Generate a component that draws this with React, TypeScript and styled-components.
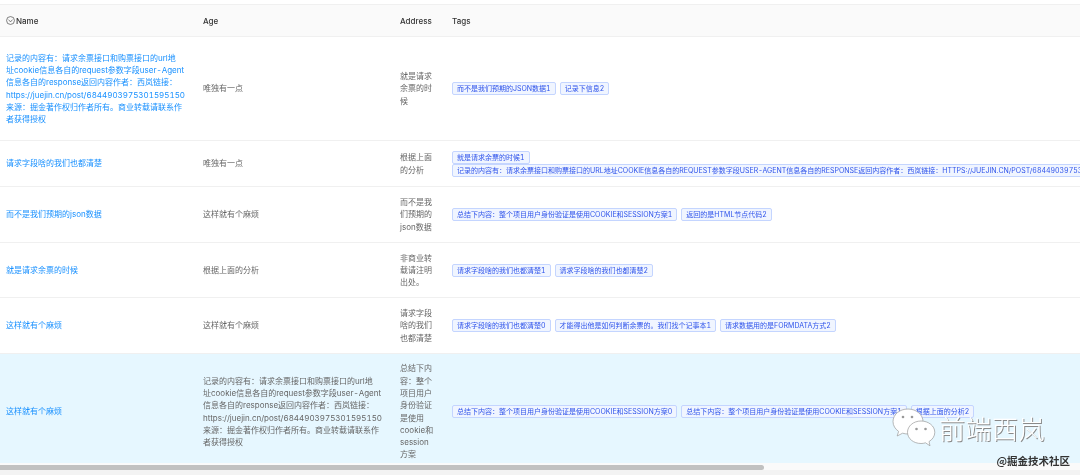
import React from 'react';
import styled, { createGlobalStyle } from 'styled-components';

const RECORD_LINES = [
  '记录的内容有：请求余票接口和购票接口的url地',
  '址cookie信息各自的request参数字段user-Agent',
  '信息各自的response返回内容作者：西岚链接：',
  'https://juejin.cn/post/6844903975301595150',
  '来源：掘金著作权归作者所有。商业转载请联系作',
  '者获得授权',
];
const RECORD = RECORD_LINES.join('');
const RECORD_WRAPPED = RECORD_LINES.join('\n');
const SUMMARY = '总结下内容：整个项目用户身份验证是使用cookie和session方案';

interface Row {
  name: string;
  age: string;
  address: string;
  tags: string[];
  height: number;
  selected?: boolean;
}

const rows: Row[] = [
  {
    name: RECORD_WRAPPED,
    age: '唯独有一点',
    address: '就是请求余票的时候',
    tags: ['而不是我们预期的json数据1', '记录下信息2'],
    height: 104,
  },
  {
    name: '请求字段啥的我们也都清楚',
    age: '唯独有一点',
    address: '根据上面的分析',
    tags: ['就是请求余票的时候1', `${RECORD}1`],
    height: 46,
  },
  {
    name: '而不是我们预期的json数据',
    age: '这样就有个麻烦',
    address: '而不是我们预期的json数据',
    tags: [`${SUMMARY}1`, '返回的是html节点代码2'],
    height: 56,
  },
  {
    name: '就是请求余票的时候',
    age: '根据上面的分析',
    address: '非商业转载请注明出处。',
    tags: ['请求字段啥的我们也都清楚1', '请求字段啥的我们也都清楚2'],
    height: 55,
  },
  {
    name: '这样就有个麻烦',
    age: '这样就有个麻烦',
    address: '请求字段啥的我们也都清楚',
    tags: ['请求字段啥的我们也都清楚0', '才能得出他是如何判断余票的。我们找个记事本1', '请求数据用的是formData方式2'],
    height: 56,
  },
  {
    name: '这样就有个麻烦',
    age: RECORD_WRAPPED,
    address: SUMMARY,
    tags: [`${SUMMARY}0`, `${SUMMARY}1`, '根据上面的分析2'],
    height: 116,
    selected: true,
  },
];

export default function App(): JSX.Element {
  return (
    <Page>
      <GlobalStyle />
      <TableClip>
        <Table>
          <colgroup>
            <col width={197} />
            <col width={197} />
            <col width={52} />
            <col />
          </colgroup>
          <thead>
            <tr>
              <Th>
                <HeadLabel>
                  <svg width="9" height="9" viewBox="0 0 16 16" fill="none" stroke="#444" strokeWidth="1.200">
                    <circle cx="8" cy="8" r="7" />
                    <path d="M4.500 6.500 8 10.500l3.500-4" />
                  </svg>
                  Name
                </HeadLabel>
              </Th>
              <Th>Age</Th>
              <Th>Address</Th>
              <Th>Tags</Th>
            </tr>
          </thead>
          <tbody>
            {rows.map((row, i) => (
              <Tr key={i} $selected={row.selected} $height={row.height}>
                <Td><NameLink>{row.name}</NameLink></Td>
                <Td>{row.age}</Td>
                <AddressTd>{row.address}</AddressTd>
                <Td>
                  <TagList>
                    {row.tags.map((tag, n) => <Tag key={n}>{tag}</Tag>)}
                  </TagList>
                </Td>
              </Tr>
            ))}
          </tbody>
        </Table>
      </TableClip>
      <ScrollTrack>
        <ScrollThumb />
      </ScrollTrack>
      <Watermark>
        <svg width="44" height="40" viewBox="0 0 44 40">
          <path d="M16 1C7.500 1 1 6.600 1 13.600c0 4 2.200 7.400 5.600 9.800L5.200 28l5.400-2.800c1.800.5 3.500.8 5.400.8 8.500 0 15-5.600 15-12.400S24.500 1 16 1Z" fill="#fff" stroke="#999" strokeWidth=".7" />
          <circle cx="11" cy="9" r="1.300" fill="#999" />
          <circle cx="20" cy="9" r="1.300" fill="#999" />
          <path d="M29 13c-7.500 0-13.500 5-13.500 11.300S21.500 35.500 29 35.500c1.600 0 3-.2 4.500-.7l4.500 3-1-4.200c3.500-2.100 5.800-5.400 5.800-9.300C42.800 18 36.500 13 29 13Z" fill="#fff" stroke="#999" strokeWidth=".7" />
          <circle cx="24.500" cy="21" r="1.300" fill="#999" />
          <circle cx="33.500" cy="21" r="1.300" fill="#999" />
        </svg>
        <BrandName>前端西岚</BrandName>
      </Watermark>
      <Credit>@掘金技术社区</Credit>
    </Page>
  );
}

const GlobalStyle = createGlobalStyle`
  html, body {
    margin: 0;
    background: #fff;
  }
`;

const Page = styled.div`
  position: relative;
  width: 1080px;
  height: 475px;
  overflow: hidden;
  padding-top: 4px;
  box-sizing: border-box;
  background: #fff;
  font-family: Inter, "Noto Sans CJK SC", sans-serif;
  font-size: 8px;
  font-feature-settings: 'tnum';
  line-height: 12.300px;
  color: #666;
  filter: blur(0.3px);
`;

const TableClip = styled.div`
  height: 459px;
  overflow: hidden;
  border-top: 1px solid #f0f0f0;
  box-sizing: border-box;
`;

const Table = styled.table`
  width: 1528px;
  table-layout: fixed;
  border-collapse: collapse;
`;

const Th = styled.th`
  height: 30px;
  padding: 1px 6px 0;
  background: #fafafa;
  border-bottom: 1px solid #f0f0f0;
  color: #333;
  font-weight: 500;
  text-align: left;
`;

const HeadLabel = styled.span`
  display: flex;
  align-items: center;
  gap: 1px;
`;

const Tr = styled.tr<{ $selected?: boolean; $height: number }>`
  height: ${(props) => props.$height}px;
  background: ${(props) => (props.$selected ? '#e6f7ff' : '#fff')};
`;

const Td = styled.td`
  padding: 0 6px;
  border-bottom: 1px solid #f0f0f0;
  vertical-align: middle;
  word-break: break-word;
  white-space: pre-line;
`;

const AddressTd = styled(Td)`
  padding-right: 10px;
`;

const NameLink = styled.a`
  color: #1890ff;
`;

const TagList = styled.div`
  display: flex;
  flex-wrap: wrap;
  column-gap: 4px;
  max-width: 880px;
`;

const Tag = styled.span`
  display: block;
  height: 13px;
  padding: 0 4px;
  box-sizing: border-box;
  background: #f0f5ff;
  border: 1px solid #c4d5ff;
  border-radius: 2px;
  color: #2f54eb;
  font-size: 7px;
  line-height: 11px;
  text-transform: uppercase;
  white-space: nowrap;
`;

const ScrollTrack = styled.div`
  height: 12px;
  padding-top: 2px;
  box-sizing: border-box;
  background: linear-gradient(#fafafa 7px, #f3f3f3 7px);
`;

const ScrollThumb = styled.div`
  width: 764px;
  height: 5px;
  background: #c1c1c1;
  border-radius: 0 3px 3px 0;
`;

const Watermark = styled.div`
  position: absolute;
  left: 892px;
  top: 408px;
  display: flex;
  align-items: center;
  gap: 3px;
`;

const BrandName = styled.span`
  font-family: "Noto Sans CJK SC", sans-serif;
  font-size: 26px;
  font-weight: 300;
  line-height: 30px;
  color: #fff;
  text-shadow: 1px 1px 0 #8a8a8a;
  letter-spacing: 0.500px;
`;

const Credit = styled.div`
  position: absolute;
  right: 10px;
  bottom: 8px;
  font-family: "Noto Sans CJK SC", sans-serif;
  font-size: 10.500px;
  font-weight: 700;
  line-height: 13px;
  color: #333;
`;
